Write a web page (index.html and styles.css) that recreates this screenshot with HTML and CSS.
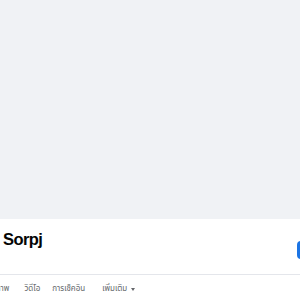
FILE: index.html
```html
<!DOCTYPE html>
<html lang="th">
<head>
<meta charset="utf-8">
<link rel="stylesheet" href="styles.css">
</head>
<body>
<div class="page">
  <div class="cover"></div>
  <div class="header">
    <div class="head-row">
      <h1 class="name">Sorpj</h1>
      <div class="btn"></div>
    </div>
    <div class="divider"></div>
    <nav class="tabs">
      <span class="tab first">รูปภาพ</span>
      <span class="tab video">วิดีโอ</span>
      <span class="tab checkin">การเช็คอิน</span>
      <span class="tab more">เพิ่มเติม <span class="caret"></span></span>
    </nav>
  </div>
</div>
</body>
</html>
```
FILE: styles.css
```css
html, body {
  margin: 0;
  padding: 0;
  background: #ffffff;
  overflow: hidden;
}
.page {
  width: 300px;
  height: 300px;
  font-family: "Liberation Sans", "Noto Sans", "Noto Sans Thai", sans-serif;
}
.cover {
  height: 219px;
  background: #f0f2f5;
}
.header {
  background: #ffffff;
}
.head-row {
  display: flex;
  justify-content: space-between;
  align-items: flex-start;
  height: 55px;
}
.name {
  margin: 11px 0 0 3px;
  font-size: 16.5px;
  font-weight: bold;
  letter-spacing: -0.6px;
  color: #050505;
  line-height: 19px;
}
.btn {
  margin-top: 22px;
  margin-right: -20px;
  width: 23px;
  height: 18px;
  border-radius: 4px;
  background: #1b74e4;
}
.divider {
  height: 1px;
  background: #e4e6eb;
}
.tabs {
  display: flex;
  padding-top: 9px;
  font-size: 8px;
  line-height: 10px;
  color: #65676b;
}
.tab {
  white-space: nowrap;
}
.first {
  margin-left: -13px;
  margin-right: 15px;
}
.video {
  margin-right: 12px;
}
.checkin {
  margin-right: 17px;
}
.more {
  display: flex;
  align-items: center;
  gap: 4px;
}
.caret {
  width: 0;
  height: 0;
  border-left: 2.5px solid transparent;
  border-right: 2.5px solid transparent;
  border-top: 3px solid #65676b;
}
```
